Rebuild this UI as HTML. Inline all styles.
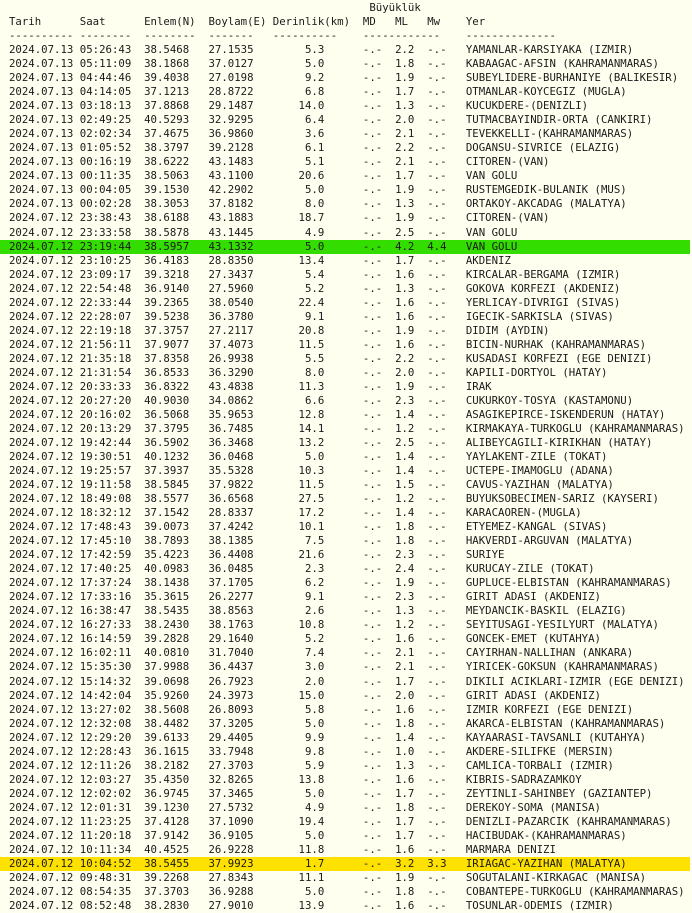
<!DOCTYPE html>
<html><head><meta charset="utf-8"><style>
html,body{margin:0;padding:0;background:#fffff0;}
body{width:692px;height:912px;overflow:hidden;}
pre{margin:0;padding:1px 0 0 9px;font-family:"DejaVu Sans Mono","Liberation Mono",monospace;font-size:10.7px;line-height:14.03px;color:#1a1a1a;}
.g{background:#33dd00;display:inline-block;width:681px;margin-left:-9px;padding-left:9px;}
.y{background:#ffe100;display:inline-block;width:681px;margin-left:-9px;padding-left:9px;}
</style></head><body><pre>                                                        Büyüklük
Tarih      Saat      Enlem(N)  Boylam(E) Derinlik(km)  MD   ML   Mw    Yer
---------- --------  --------  -------   ----------    ------------    --------------
2024.07.13 05:26:43  38.5468   27.1535        5.3      -.-  2.2  -.-   YAMANLAR-KARSIYAKA (IZMIR)
2024.07.13 05:11:09  38.1868   37.0127        5.0      -.-  1.8  -.-   KABAAGAC-AFSIN (KAHRAMANMARAS)
2024.07.13 04:44:46  39.4038   27.0198        9.2      -.-  1.9  -.-   SUBEYLIDERE-BURHANIYE (BALIKESIR)
2024.07.13 04:14:05  37.1213   28.8722        6.8      -.-  1.7  -.-   OTMANLAR-KOYCEGIZ (MUGLA)
2024.07.13 03:18:13  37.8868   29.1487       14.0      -.-  1.3  -.-   KUCUKDERE-(DENIZLI)
2024.07.13 02:49:25  40.5293   32.9295        6.4      -.-  2.0  -.-   TUTMACBAYINDIR-ORTA (CANKIRI)
2024.07.13 02:02:34  37.4675   36.9860        3.6      -.-  2.1  -.-   TEVEKKELLI-(KAHRAMANMARAS)
2024.07.13 01:05:52  38.3797   39.2128        6.1      -.-  2.2  -.-   DOGANSU-SIVRICE (ELAZIG)
2024.07.13 00:16:19  38.6222   43.1483        5.1      -.-  2.1  -.-   CITOREN-(VAN)
2024.07.13 00:11:35  38.5063   43.1100       20.6      -.-  1.7  -.-   VAN GOLU
2024.07.13 00:04:05  39.1530   42.2902        5.0      -.-  1.9  -.-   RUSTEMGEDIK-BULANIK (MUS)
2024.07.13 00:02:28  38.3053   37.8182        8.0      -.-  1.3  -.-   ORTAKOY-AKCADAG (MALATYA)
2024.07.12 23:38:43  38.6188   43.1883       18.7      -.-  1.9  -.-   CITOREN-(VAN)
2024.07.12 23:33:58  38.5878   43.1445        4.9      -.-  2.5  -.-   VAN GOLU
<span class="g">2024.07.12 23:19:44  38.5957   43.1332        5.0      -.-  4.2  4.4   VAN GOLU</span>
2024.07.12 23:10:25  36.4183   28.8350       13.4      -.-  1.7  -.-   AKDENIZ
2024.07.12 23:09:17  39.3218   27.3437        5.4      -.-  1.6  -.-   KIRCALAR-BERGAMA (IZMIR)
2024.07.12 22:54:48  36.9140   27.5960        5.2      -.-  1.3  -.-   GOKOVA KORFEZI (AKDENIZ)
2024.07.12 22:33:44  39.2365   38.0540       22.4      -.-  1.6  -.-   YERLICAY-DIVRIGI (SIVAS)
2024.07.12 22:28:07  39.5238   36.3780        9.1      -.-  1.6  -.-   IGECIK-SARKISLA (SIVAS)
2024.07.12 22:19:18  37.3757   27.2117       20.8      -.-  1.9  -.-   DIDIM (AYDIN)
2024.07.12 21:56:11  37.9077   37.4073       11.5      -.-  1.6  -.-   BICIN-NURHAK (KAHRAMANMARAS)
2024.07.12 21:35:18  37.8358   26.9938        5.5      -.-  2.2  -.-   KUSADASI KORFEZI (EGE DENIZI)
2024.07.12 21:31:54  36.8533   36.3290        8.0      -.-  2.0  -.-   KAPILI-DORTYOL (HATAY)
2024.07.12 20:33:33  36.8322   43.4838       11.3      -.-  1.9  -.-   IRAK
2024.07.12 20:27:20  40.9030   34.0862        6.6      -.-  2.3  -.-   CUKURKOY-TOSYA (KASTAMONU)
2024.07.12 20:16:02  36.5068   35.9653       12.8      -.-  1.4  -.-   ASAGIKEPIRCE-ISKENDERUN (HATAY)
2024.07.12 20:13:29  37.3795   36.7485       14.1      -.-  1.2  -.-   KIRMAKAYA-TURKOGLU (KAHRAMANMARAS)
2024.07.12 19:42:44  36.5902   36.3468       13.2      -.-  2.5  -.-   ALIBEYCAGILI-KIRIKHAN (HATAY)
2024.07.12 19:30:51  40.1232   36.0468        5.0      -.-  1.4  -.-   YAYLAKENT-ZILE (TOKAT)
2024.07.12 19:25:57  37.3937   35.5328       10.3      -.-  1.4  -.-   UCTEPE-IMAMOGLU (ADANA)
2024.07.12 19:11:58  38.5845   37.9822       11.5      -.-  1.5  -.-   CAVUS-YAZIHAN (MALATYA)
2024.07.12 18:49:08  38.5577   36.6568       27.5      -.-  1.2  -.-   BUYUKSOBECIMEN-SARIZ (KAYSERI)
2024.07.12 18:32:12  37.1542   28.8337       17.2      -.-  1.4  -.-   KARACAOREN-(MUGLA)
2024.07.12 17:48:43  39.0073   37.4242       10.1      -.-  1.8  -.-   ETYEMEZ-KANGAL (SIVAS)
2024.07.12 17:45:10  38.7893   38.1385        7.5      -.-  1.8  -.-   HAKVERDI-ARGUVAN (MALATYA)
2024.07.12 17:42:59  35.4223   36.4408       21.6      -.-  2.3  -.-   SURIYE
2024.07.12 17:40:25  40.0983   36.0485        2.3      -.-  2.4  -.-   KURUCAY-ZILE (TOKAT)
2024.07.12 17:37:24  38.1438   37.1705        6.2      -.-  1.9  -.-   GUPLUCE-ELBISTAN (KAHRAMANMARAS)
2024.07.12 17:33:16  35.3615   26.2277        9.1      -.-  2.3  -.-   GIRIT ADASI (AKDENIZ)
2024.07.12 16:38:47  38.5435   38.8563        2.6      -.-  1.3  -.-   MEYDANCIK-BASKIL (ELAZIG)
2024.07.12 16:27:33  38.2430   38.1763       10.8      -.-  1.2  -.-   SEYITUSAGI-YESILYURT (MALATYA)
2024.07.12 16:14:59  39.2828   29.1640        5.2      -.-  1.6  -.-   GONCEK-EMET (KUTAHYA)
2024.07.12 16:02:11  40.0810   31.7040        7.4      -.-  2.1  -.-   CAYIRHAN-NALLIHAN (ANKARA)
2024.07.12 15:35:30  37.9988   36.4437        3.0      -.-  2.1  -.-   YIRICEK-GOKSUN (KAHRAMANMARAS)
2024.07.12 15:14:32  39.0698   26.7923        2.0      -.-  1.7  -.-   DIKILI ACIKLARI-IZMIR (EGE DENIZI)
2024.07.12 14:42:04  35.9260   24.3973       15.0      -.-  2.0  -.-   GIRIT ADASI (AKDENIZ)
2024.07.12 13:27:02  38.5608   26.8093        5.8      -.-  1.6  -.-   IZMIR KORFEZI (EGE DENIZI)
2024.07.12 12:32:08  38.4482   37.3205        5.0      -.-  1.8  -.-   AKARCA-ELBISTAN (KAHRAMANMARAS)
2024.07.12 12:29:20  39.6133   29.4405        9.9      -.-  1.4  -.-   KAYAARASI-TAVSANLI (KUTAHYA)
2024.07.12 12:28:43  36.1615   33.7948        9.8      -.-  1.0  -.-   AKDERE-SILIFKE (MERSIN)
2024.07.12 12:11:26  38.2182   27.3703        5.9      -.-  1.3  -.-   CAMLICA-TORBALI (IZMIR)
2024.07.12 12:03:27  35.4350   32.8265       13.8      -.-  1.6  -.-   KIBRIS-SADRAZAMKOY
2024.07.12 12:02:02  36.9745   37.3465        5.0      -.-  1.7  -.-   ZEYTINLI-SAHINBEY (GAZIANTEP)
2024.07.12 12:01:31  39.1230   27.5732        4.9      -.-  1.8  -.-   DEREKOY-SOMA (MANISA)
2024.07.12 11:23:25  37.4128   37.1090       19.4      -.-  1.7  -.-   DENIZLI-PAZARCIK (KAHRAMANMARAS)
2024.07.12 11:20:18  37.9142   36.9105        5.0      -.-  1.7  -.-   HACIBUDAK-(KAHRAMANMARAS)
2024.07.12 10:11:34  40.4525   26.9228       11.8      -.-  1.6  -.-   MARMARA DENIZI
<span class="y">2024.07.12 10:04:52  38.5455   37.9923        1.7      -.-  3.2  3.3   IRIAGAC-YAZIHAN (MALATYA)</span>
2024.07.12 09:48:31  39.2268   27.8343       11.1      -.-  1.9  -.-   SOGUTALANI-KIRKAGAC (MANISA)
2024.07.12 08:54:35  37.3703   36.9288        5.0      -.-  1.8  -.-   COBANTEPE-TURKOGLU (KAHRAMANMARAS)
2024.07.12 08:52:48  38.2830   27.9010       13.9      -.-  1.6  -.-   TOSUNLAR-ODEMIS (IZMIR)
</pre></body></html>
